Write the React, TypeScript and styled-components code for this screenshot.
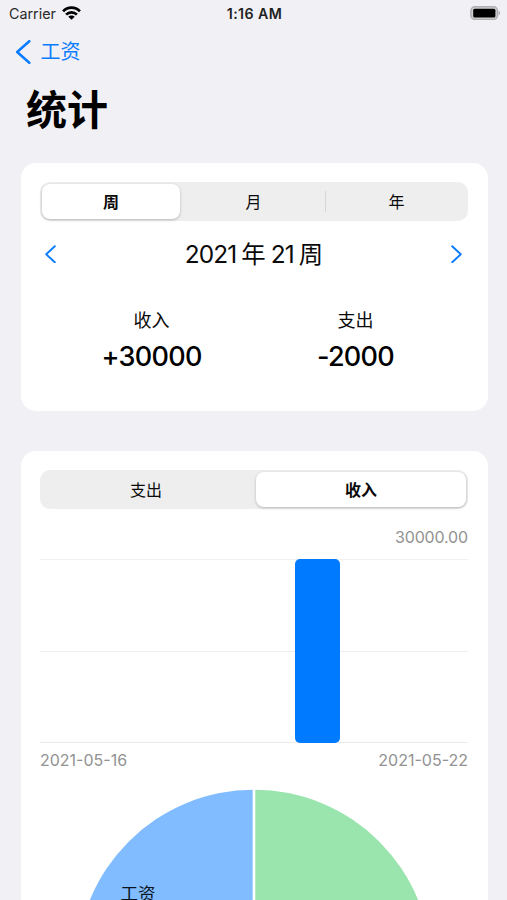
import React from "react";
import styled, { createGlobalStyle } from "styled-components";

const GlobalStyle = createGlobalStyle`
  *, *::before, *::after { box-sizing: border-box; }
  body { margin: 0; background: #f1f0f5; }
  button { font: inherit; color: inherit; background: none; border: 0; padding: 0; }
`;

const Screen = styled.main`
  width: 507px;
  height: 900px;
  overflow: hidden;
  background: #f1f0f5;
  color: #0a0a0a;
  font-family: Inter, "Noto Sans CJK SC", sans-serif;
`;

const StatusBar = styled.header`
  display: grid;
  grid-template-columns: 1fr auto 1fr;
  align-items: center;
  height: 28px;
  padding: 0 6px 0 9px;
`;

const Carrier = styled.div`
  display: flex;
  align-items: center;
  gap: 6px;
  margin-top: -1px;
  font-size: 14.3px;
  color: #2a2a2a;
  svg { margin-top: -2px; }
`;

const Clock = styled.div`
  margin: -2px 1px 0 0;
  font-size: 14.2px;
  font-weight: 600;
  letter-spacing: 0.4px;
  color: #222;
`;

const Battery = styled.div`
  display: flex;
  justify-content: flex-end;
  margin-top: -2px;
`;

const BackLink = styled.button`
  display: flex;
  align-items: center;
  gap: 9px;
  height: 48px;
  padding-left: 16px;
  font-size: 20px;
  line-height: 30px;
  color: #0a7cff;
  svg { margin-right: 1px; }
`;

const Title = styled.h1`
  height: 87px;
  margin: 0;
  padding: 2px 0 0 26px;
  font-size: 41px;
  font-weight: 700;
  line-height: 65px;
  color: #000;
`;

const Card = styled.section<{ $height: number }>`
  height: ${(p) => p.$height}px;
  margin: 0 19.5px 40px 20.5px;
  padding: 19px 19.5px;
  border-radius: 15px;
  background: #fff;
`;

const Segments = styled.div<{ $columns: string }>`
  display: grid;
  grid-template-columns: ${(p) => p.$columns};
  align-items: center;
  height: 39px;
  padding: 2px;
  border-radius: 10px;
  background: #eee;
`;

const Segment = styled.button<{ $active?: boolean; $divided?: boolean }>`
  position: relative;
  height: 35px;
  border-radius: 8px;
  font-size: 16px;
  line-height: 37px;
  font-weight: ${(p) => (p.$active ? 600 : 400)};
  background: ${(p) => (p.$active ? "#fff" : "transparent")};
  box-shadow: ${(p) => (p.$active ? "0 1px 3px rgba(0, 0, 0, 0.24)" : "none")};

  &::after {
    content: "";
    display: ${(p) => (p.$divided ? "block" : "none")};
    position: absolute;
    right: 1px;
    top: 7px;
    width: 1px;
    height: 21px;
    background: #d6d6d6;
  }
`;

const PeriodRow = styled.div`
  display: flex;
  align-items: center;
  justify-content: space-between;
  height: 66px;
  padding: 0 6px 0 5px;
`;

const Period = styled.div`
  font-size: 24.4px;
  line-height: 36px;
  letter-spacing: -0.9px;
`;

const Unit = styled.span`
  margin-left: 5px;
`;

const Totals = styled.div`
  display: grid;
  grid-template-columns: 204px 204px;
  padding: 18px 0 0 9.5px;
`;

const Total = styled.div`
  text-align: center;
`;

const TotalLabel = styled.div`
  height: 31px;
  font-size: 18px;
  line-height: 32px;
`;

const Amount = styled.div`
  font-size: 27px;
  line-height: 42px;
  font-weight: 500;
  letter-spacing: -0.7px;
  color: #000;
`;

const Caption = styled.div`
  display: flex;
  justify-content: space-between;
  font-size: 16px;
  line-height: 20px;
  color: #929292;
`;

const MaxValue = styled(Caption)`
  justify-content: flex-end;
  height: 50px;
  padding-top: 18px;
  letter-spacing: -0.15px;
`;

const Plot = styled.div`
  display: grid;
  grid-template-columns: repeat(7, 1fr);
  align-items: end;
  height: 184px;
  margin-bottom: 7px;
  background:
    linear-gradient(#f0f0f0, #f0f0f0) 0 0 / 100% 1px no-repeat,
    linear-gradient(#efefef, #efefef) 0 92px / 100% 1px no-repeat,
    linear-gradient(#ebebeb, #ebebeb) 0 183px / 100% 1px no-repeat;
`;

const Bar = styled.div`
  width: 45px;
  margin-left: 10.6px;
  border-radius: 5px;
  background: #007aff;
`;

const Pie = styled.svg`
  display: block;
  margin: 19px auto 0;
  text { font-size: 17.5px; }
`;

const Chevron = ({ flip, w, h, stroke }: { flip?: boolean; w: number; h: number; stroke: number }) => (
  <svg width={w} height={h} viewBox={`0 0 ${w} ${h}`} fill="none" aria-hidden="true">
    <path
      d={flip ? `M1.2 1.2 L${w - 1.2} ${h / 2} L1.2 ${h - 1.2}` : `M${w - 1.2} 1.2 L1.2 ${h / 2} L${w - 1.2} ${h - 1.2}`}
      stroke="#0a7cff"
      strokeWidth={stroke}
      strokeLinecap="round"
      strokeLinejoin="round"
    />
  </svg>
);

const WifiIcon = () => (
  <svg width="19" height="14" viewBox="0 0 19 14" fill="none" stroke="#000" strokeWidth="2.7" aria-hidden="true">
    <path d="M1.1 5.3 C5.7 .3 13.3 .3 17.9 5.3" />
    <path d="M4.1 8.6 C7.1 5.5 11.9 5.5 14.9 8.6" />
    <path d="M9.5 13.8 L6.3 10.8 C8 9.1 11 9.1 12.7 10.8 Z" fill="#000" stroke="none" />
  </svg>
);

const BatteryIcon = () => (
  <svg width="31" height="14" viewBox="0 0 31 14" aria-hidden="true">
    <rect x=".9" y=".8" width="26.6" height="12.6" rx="4" fill="#d0d0d2" stroke="#b0b0b2" strokeWidth="1.5" />
    <rect x="3.2" y="2.7" width="22.2" height="8.8" rx="1.5" fill="#000" />
    <path d="M28.6 4.7 Q31.6 7 28.6 9.3 Z" fill="#aaaaac" />
  </svg>
);

const DAILY_INCOME = [0, 0, 0, 0, 30000, 0, 0];
const MAX_INCOME = 30000;

export default function App() {
  return (
    <Screen>
      <GlobalStyle />
      <StatusBar>
        <Carrier>Carrier<WifiIcon /></Carrier>
        <Clock>1:16 AM</Clock>
        <Battery><BatteryIcon /></Battery>
      </StatusBar>
      <BackLink><Chevron w={14.5} h={24} stroke={2.5} />工资</BackLink>
      <Title>统计</Title>

      <Card $height={248}>
        <Segments $columns="138px 147px 1fr">
          <Segment $active>周</Segment>
          <Segment $divided>月</Segment>
          <Segment>年</Segment>
        </Segments>
        <PeriodRow>
          <Chevron w={11} h={18.5} stroke={1.9} />
          <Period>2021<Unit>年</Unit>{" "}21<Unit>周</Unit></Period>
          <Chevron flip w={11} h={18.5} stroke={1.9} />
        </PeriodRow>
        <Totals>
          <Total>
            <TotalLabel>收入</TotalLabel>
            <Amount>+30000</Amount>
          </Total>
          <Total>
            <TotalLabel>支出</TotalLabel>
            <Amount>-2000</Amount>
          </Total>
        </Totals>
      </Card>

      <Card $height={720}>
        <Segments $columns="208px 1fr">
          <Segment>支出</Segment>
          <ActiveTail $active>收入</ActiveTail>
        </Segments>
        <MaxValue>30000.00</MaxValue>
        <Plot>
          {DAILY_INCOME.map((value, day) => (
            <Bar key={day} style={{ height: (value / MAX_INCOME) * 184 }} />
          ))}
        </Plot>
        <Caption>
          <span>2021-05-16</span>
          <span>2021-05-22</span>
        </Caption>
        <Pie width="356" height="356" viewBox="-178 -178 356 356">
          <path d="M0 -177.3 A177.3 177.3 0 0 0 0 177.3 Z" fill="#80bcff" />
          <path d="M0 -177.3 A177.3 177.3 0 0 1 0 177.3 Z" fill="#9ae4ad" />
          <path d="M0 -178 V178" stroke="#fff" strokeWidth="2.6" />
          <text x="-116" y="-67" textAnchor="middle" fill="#0a1420">工资</text>
        </Pie>
      </Card>
    </Screen>
  );
}

const ActiveTail = styled(Segment)`
  margin-left: 6px;
`;
